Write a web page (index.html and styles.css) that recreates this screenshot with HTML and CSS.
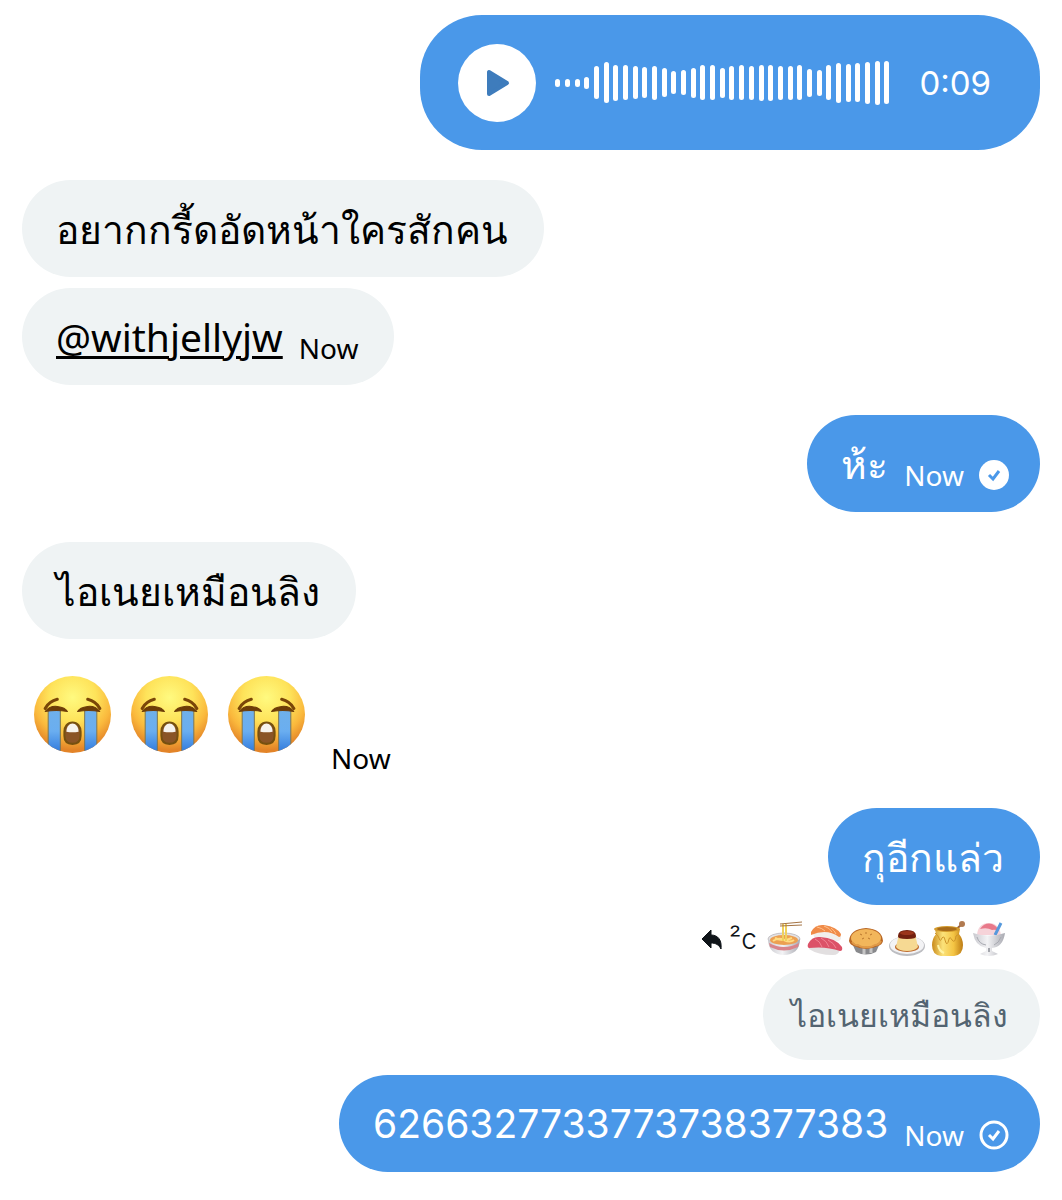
FILE: index.html
```html
<!DOCTYPE html>
<html lang="th">
<head>
    <meta charset="UTF-8">
    <meta name="viewport" content="width=device-width, initial-scale=1.0">
    <title>Messages</title>
    <link rel="stylesheet" href="styles.css">
</head>
<body>
    <!-- shared shapes -->
    <svg class="defs" aria-hidden="true">
        <defs>
            <radialGradient id="face" cx="50%" cy="28%" r="68%">
                <stop offset="0" stop-color="#fffa80"/>
                <stop offset="0.45" stop-color="#fee35a"/>
                <stop offset="0.75" stop-color="#fab83c"/>
                <stop offset="1" stop-color="#e38428"/>
            </radialGradient>
            <linearGradient id="tear" x1="0" y1="0" x2="0" y2="1">
                <stop offset="0" stop-color="#6fb0ea"/>
                <stop offset="0.5" stop-color="#6aaef0"/>
                <stop offset="1" stop-color="#2f78dc"/>
            </linearGradient>
            <linearGradient id="bowl" x1="0" y1="0" x2="1" y2="0">
                <stop offset="0" stop-color="#c9c9cf"/>
                <stop offset="0.45" stop-color="#f3f3f5"/>
                <stop offset="1" stop-color="#a9aab2"/>
            </linearGradient>
            <linearGradient id="honey" x1="0" y1="0" x2="1" y2="0">
                <stop offset="0" stop-color="#c98a1b"/>
                <stop offset="0.35" stop-color="#fbe27a"/>
                <stop offset="0.7" stop-color="#f4c443"/>
                <stop offset="1" stop-color="#bd7c14"/>
            </linearGradient>
            <clipPath id="round"><circle cx="38" cy="38" r="38"/></clipPath>
            <symbol id="sob" viewBox="0 0 76 76">
                <circle cx="38" cy="38" r="38" fill="url(#face)"/>
                <g clip-path="url(#round)">
                    <path d="M14 33h12v43H14zM50 33h12v43H50z" fill="url(#tear)" stroke="#7d7653" stroke-width="1"/>
                    <path d="M14 70q6 5 12 4v4H14zM62 70q-6 5-12 4v4h12z" fill="#2e75dc"/>
                </g>
                <path d="M11 35q5-6 12-5 8 1 10 5-11-2-22 0zM65 35q-5-6-12-5-8 1-10 5 11-2 22 0z" fill="#6d3d08" stroke="#6d3d08" stroke-linejoin="round"/>
                <path d="M11 32q4-7 12-9M65 32q-4-7-12-9" fill="none" stroke="#7a4608" stroke-width="3" stroke-linecap="round"/>
                <path d="M38 46c5 0 8 4 8 9v4c0 5-3 8-8 8s-8-3-8-8v-4c0-5 3-9 8-9z" fill="#8a5426" stroke="#76500f" stroke-width="2"/>
                <path d="M32 55c0-5 3-8 6-8s6 3 6 8q-6 1-12 0z" fill="#f6f3ee"/>
            </symbol>
        </defs>
    </svg>

    <main class="chat">
        <div class="message sent">
            <div class="voice">
                <button type="button" class="play" aria-label="Play">
                    <svg viewBox="0 0 24 28" width="24" height="28"><path d="M3 3v22l18-11z" fill="#3e7cbc" stroke="#3e7cbc" stroke-width="4" stroke-linejoin="round"/></svg>
                </button>
                <div class="wave" id="wave"></div>
                <span class="duration">0:09</span>
            </div>
        </div>

        <div class="message turn">
            <div class="bubble">อยากกรี้ดอัดหน้าใครสักคน</div>
        </div>
        <div class="message">
            <div class="bubble"><a href="#">@withjellyjw</a> <span class="time">Now</span></div>
        </div>

        <div class="message sent turn">
            <div class="bubble">ห้ะ
                <span class="time">Now
                    <svg class="status" viewBox="0 0 30 30"><circle cx="15" cy="15" r="15" fill="#fff"/><path d="M10 15l4 4 6-8" fill="none" stroke="#4a98e9" stroke-width="3"/></svg>
                </span>
            </div>
        </div>

        <div class="message turn">
            <div class="bubble">ไอเนยเหมือนลิง</div>
        </div>
        <div class="message emoji-message">
            <svg class="emoji" role="img" aria-label="😭"><use href="#sob"/></svg>
            <svg class="emoji" role="img" aria-label="😭"><use href="#sob"/></svg>
            <svg class="emoji" role="img" aria-label="😭"><use href="#sob"/></svg>
            <span class="time">Now</span>
        </div>

        <div class="message sent turn">
            <div class="bubble">กุอีกแล่ว</div>
        </div>

        <div class="reply-info">
            <svg class="arrow" viewBox="0 0 20 20"><path d="M9 1v5c7 0 11 5 10 14-2-4-5-6-10-6v5L0 10z" fill="#0f1419" stroke="#0f1419" stroke-linejoin="round"/></svg>
            <span class="reply-name">²c</span>
            <span class="foods">
                <svg viewBox="0 0 36 36" role="img" aria-label="🍜">
                    <ellipse cx="18" cy="18" rx="16" ry="6" fill="#e3e2e5" stroke="#c4c1c4"/>
                    <path d="M2 18c0 11 7 16 16 16s16-5 16-16q-16 9-32 0z" fill="url(#bowl)"/>
                    <path d="M3 22q15 8 30 0l-1 4q-14 7-28 0z" fill="#d9848b"/>
                    <ellipse cx="18" cy="19" rx="14" ry="5" fill="#eca052"/>
                    <path d="M7 20q5-4 11-1t10 0M9 17q8 4 17 0" stroke="#ffdc82" stroke-width="2" fill="none"/>
                    <path d="M17 3v17M20 3v17" stroke="#efd05e" stroke-width="2"/>
                    <path d="M14 3l22-2M14 5l22-1" stroke="#a47343"/>
                </svg>
                <svg viewBox="0 0 36 36" role="img" aria-label="🍣">
                    <path d="M6 11q14-3 28 4v3q-2 3-6 2L7 16z" fill="#f1eeec"/>
                    <path d="M4 11q4-8 13-7 13 2 17 9 0 3-2 3Q20 7 4 14z" fill="#f08b49"/>
                    <path d="M10 6q5 1 8 4M17 5q6 2 8 6M24 7q4 3 5 6" stroke="#ffc18a" fill="none"/>
                    <path d="M2 24q16 0 31 4-1 6-7 6-15 0-24-6z" fill="#e2dfe0"/>
                    <path d="M1 23q4-8 12-7 16 1 22 10 1 4-2 4-14-5-31-3-2-1-1-4z" fill="#dc5268"/>
                    <path d="M8 18q5 2 7 8M14 17q6 3 8 9M21 19q6 3 8 8" stroke="#f08494" fill="none"/>
                </svg>
                <svg viewBox="0 0 36 36" role="img" aria-label="🥧">
                    <path d="M3 20l5 11q10 5 20 0l5-11z" fill="#88898c"/>
                    <path d="M16 27v6M23 27v5" stroke="#c5c5c5" stroke-width="3"/>
                    <path d="M1 20Q2 8 18 7q16 1 17 13-1 4-5 5-12 6-24 0-4-1-5-5z" fill="#b96725"/>
                    <ellipse cx="18" cy="17" rx="15" ry="9" fill="#f2b65b"/>
                    <path d="M4 21q3 4 6 3 4 3 8 2 5 1 9-2 4 0 6-4" stroke="#e09a48" stroke-width="2" fill="none"/>
                    <path d="M18 11v2M12 13l2 1M24 13l-2 1M14 18l2-1M22 18l-2-1" stroke="#b9772e" stroke-width="1"/>
                </svg>
                <svg viewBox="0 0 36 36" role="img" aria-label="🍮">
                    <ellipse cx="18" cy="25" rx="18" ry="10" fill="#bdbec2"/>
                    <ellipse cx="18" cy="24" rx="17" ry="9" fill="#f3f3f5"/>
                    <ellipse cx="18" cy="26" rx="12" ry="5" fill="#bd6a2c"/>
                    <path d="M10 13L7 26q3 4 11 4t11-4l-3-13z" fill="#f6d993"/>
                    <path d="M9 15q0-6 9-6t9 6q1 3-9 3t-9-3z" fill="#72200f"/>
                    <ellipse cx="18" cy="12" rx="7" ry="2" fill="#9b351b"/>
                </svg>
                <svg viewBox="0 0 36 36" role="img" aria-label="🍯">
                    <path d="M22 12l9-8" stroke="#9a6138" stroke-width="2"/>
                    <ellipse cx="32" cy="3" rx="3" ry="3" fill="#b17a50"/>
                    <path d="M5 8h25l-1 5q4 5 4 11 0 10-9 11H11Q2 34 2 24q0-6 4-11z" fill="url(#honey)"/>
                    <ellipse cx="17" cy="8" rx="13" ry="3" fill="#d39b2d"/>
                    <ellipse cx="17" cy="8" rx="10" ry="2" fill="#a86c1b"/>
                    <path d="M5 12q3 2 4 5 1 5 3 0 2-3 3 2 2 8 4-1 1-3 3 1 3 4 4-4l3-2" fill="none" stroke="#cf952b" stroke-width="1"/>
                    <path d="M8 24q1 6 6 8" fill="none" stroke="#fff4a6" stroke-width="2"/>
                </svg>
                <svg viewBox="0 0 36 36" role="img" aria-label="🍧">
                    <path d="M6 14q1-12 12-12 10 0 12 12z" fill="#f6d3d9"/>
                    <path d="M9 8q5-7 12-5 5 2 7 7-4-2-7-1-5-3-12-1z" fill="#e8798a"/>
                    <path d="M24 14l6-12" stroke="#5699dc" stroke-width="3"/>
                    <path d="M2 12q16 5 32 0-2 14-13 15v3l6 3q-9 4-18 0l6-3v-3Q4 25 2 12z" fill="url(#bowl)"/>
                    <path d="M6 16q2 7 9 8M30 16q-2 6-7 8" fill="none" stroke="#a8aab1"/>
                    <path d="M18 27v4" stroke="#a3a5ab" stroke-width="2"/>
                </svg>
            </span>
        </div>
        <div class="message sent">
            <div class="bubble quoted">ไอเนยเหมือนลิง</div>
        </div>
        <div class="message sent reply">
            <div class="bubble"><span class="number">6266327733773738377383</span>
                <span class="time">Now
                    <svg class="status" viewBox="0 0 30 30"><circle cx="15" cy="15" r="13" fill="none" stroke="#fff" stroke-width="3"/><path d="M10 15l4 4 6-8" fill="none" stroke="#fff" stroke-width="3"/></svg>
                </span>
            </div>
        </div>
    </main>

    <script>
        const levels = [8, 8, 8, 12, 33, 41, 36, 35, 33, 31, 34, 29, 23, 25, 30, 35, 35, 30, 34, 35, 34, 36, 36, 34, 34, 35, 28, 26, 35, 40, 38, 39, 42, 44, 43];
        const wave = document.getElementById('wave');

        levels.forEach(level => {
            const bar = document.createElement('span');
            bar.className = 'bar';
            bar.style.height = `${level}px`;
            wave.appendChild(bar);
        });
    </script>
</body>
</html>
```
FILE: styles.css
```css
body {
    font-family: "Noto Sans", sans-serif;
    background: #fff;
    color: #0f1419;
    margin: 0;
}

.defs {
    position: absolute;
    width: 0;
    height: 0;
}

.chat {
    display: flex;
    flex-direction: column;
    padding: 15px 22px 28px;
}

.message {
    display: flex;
    margin-top: 11px;
}

.message.sent {
    justify-content: flex-end;
}

.message:first-child {
    margin-top: 0;
}

.message.turn {
    margin-top: 30px;
}

.bubble {
    display: flex;
    align-items: center;
    gap: 16px;
    box-sizing: border-box;
    height: 97px;
    padding: 0 36px 0 34px;
    border-radius: 49px;
    background: #eff3f4;
    color: #000;
    font-size: 39px;
    line-height: 56px;
    white-space: nowrap;
}

.bubble a {
    color: inherit;
    text-decoration-thickness: 3px;
    text-underline-offset: 4px;
}

.sent .bubble {
    background: #4a98e9;
    color: #fff;
}

.time {
    display: flex;
    align-items: center;
    gap: 15px;
    padding-top: 22px;
    font-size: 28px;
    line-height: 32px;
}

.sent .bubble:has(.time) {
    padding-right: 31px;
}

.status {
    width: 30px;
    height: 30px;
}

.number {
    font-family: Inter, sans-serif;
}

.voice {
    display: flex;
    align-items: center;
    box-sizing: border-box;
    height: 135px;
    padding: 0 49px 0 38px;
    border-radius: 62px;
    background: #4a98e9;
    color: #fff;
}

.play {
    display: flex;
    align-items: center;
    justify-content: center;
    width: 78px;
    height: 78px;
    padding: 0 0 0 2px;
    border: none;
    border-radius: 50%;
    background: #fff;
    cursor: pointer;
}

.wave {
    display: flex;
    align-items: center;
    justify-content: space-between;
    width: 334px;
    margin: 0 30px 0 19px;
}

.bar {
    width: 5px;
    border-radius: 3px;
    background: #fff;
}

.duration {
    font-family: Inter, sans-serif;
    font-size: 33px;
}

.emoji-message {
    align-items: flex-start;
    gap: 20px;
    height: 102px;
    margin-top: 37px;
    padding-left: 12px;
}

.emoji {
    width: 77px;
    height: 77px;
}

.emoji-message .time {
    padding: 66px 0 0 6px;
    color: #000;
}

.reply-info {
    display: flex;
    align-items: center;
    justify-content: flex-end;
    height: 38px;
    margin-top: 15px;
    padding-right: 33px;
}

.arrow {
    width: 20px;
    height: 20px;
}

.reply-name {
    margin: 0 9px 0 7px;
    font-family: Inter, sans-serif;
    font-size: 28px;
    font-weight: 300;
}

.foods {
    display: flex;
    gap: 5px;
}

.foods svg {
    width: 36px;
    height: 36px;
}

.sent .quoted {
    height: 91px;
    padding: 0 32px 0 28px;
    background: #eff3f4;
    color: #536471;
    font-size: 32px;
}

.message.reply {
    margin-top: 15px;
}
```
